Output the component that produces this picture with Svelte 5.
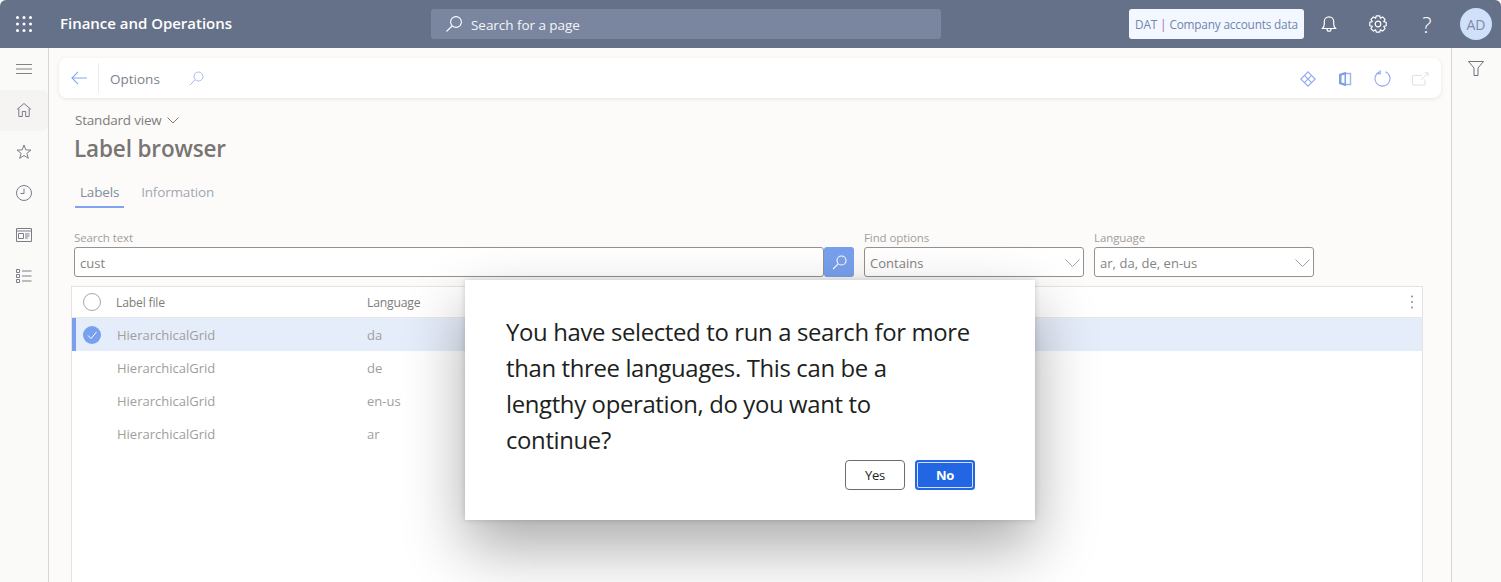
<script>
  const navItems = ['home', 'star', 'clock', 'workspace', 'list']
  const rows = [
    { file: 'HierarchicalGrid', lang: 'da', selected: true },
    { file: 'HierarchicalGrid', lang: 'de' },
    { file: 'HierarchicalGrid', lang: 'en-us' },
    { file: 'HierarchicalGrid', lang: 'ar' }
  ]

  // eight-tooth outline for the settings icon
  function gearPath(cx, cy, outer, inner, teeth) {
    const pts = []
    const step = (Math.PI * 2) / teeth
    for (let i = 0; i < teeth; i++) {
      const a = i * step
      for (const [r, d] of [[inner, -0.5], [outer, -0.27], [outer, 0.27], [inner, 0.5]]) {
        const t = a + d * step
        pts.push(`${(cx + r * Math.cos(t)).toFixed(2)} ${(cy + r * Math.sin(t)).toFixed(2)}`)
      }
    }
    return 'M' + pts.join('L') + 'Z'
  }
  const gear = gearPath(9, 9, 8.4, 6.2, 8)
</script>

<div class="page">
  <header class="topbar">
    <svg class="waffle" width="16" height="16" viewBox="0 0 16 16" fill="#fff">
      {#each [1.5, 8, 14.5] as cy}
        {#each [1.5, 8, 14.5] as cx}
          <circle {cx} {cy} r="1.5" />
        {/each}
      {/each}
    </svg>
    <div class="brand">Finance and Operations</div>
    <div class="globalsearch">
      <svg width="18" height="18" viewBox="0 0 18 18" fill="none" stroke="#fff" stroke-width="1.1">
        <circle cx="11" cy="7" r="5.4" /><path d="M7 11 1.5 16.5" />
      </svg>
      <span>Search for a page</span>
    </div>
    <div class="company">DAT <i>|</i> Company accounts data</div>
    <div class="topicons">
      <svg width="16" height="18" viewBox="0 0 16 18" fill="none" stroke="#fff" stroke-width="1.2">
        <path d="M1.5 13.5h13c-1.2-1.3-1.8-2.5-1.8-4.5V6.500a4.700 4.700 0 0 0-9.400 0V9c0 2-.6 3.200-1.800 4.500Z" /><path d="M6 14c0 3 4 3 4 0" />
      </svg>
      <svg width="18" height="18" viewBox="0 0 18 18" fill="none" stroke="#fff" stroke-width="1.2">
        <path d={gear} stroke-linejoin="round" /><circle cx="9" cy="9" r="2.8" />
      </svg>
      <span class="help">?</span>
      <div class="avatar">AD</div>
    </div>
  </header>

  <div class="workspace">
    <nav class="sidenav">
      <button class="navbtn burger" aria-label="Menu">
        <svg width="16" height="10" viewBox="0 0 16 10" stroke="#85827f" stroke-width="1"><path d="M0 .5h16M0 5h16M0 9.500h16" /></svg>
      </button>
      {#each navItems as item}
        <button class="navbtn" class:active={item === 'home'} aria-label={item}>
          <svg width="16" height="16" viewBox="0 0 16 16" fill="none" stroke="#807b88" stroke-width="1">
            {#if item === 'home'}
              <path d="M1 7.500 8 1.500l7 6M2.800 6.500v8h3.500V9.500h3.400v5h3.500v-8" />
            {:else if item === 'star'}
              <path d="m8 1 1.800 4.900 5.200.2-4.100 3.200 1.400 5L8 11.500l-4.300 2.800 1.400-5L1 6.100l5.200-.2Z" />
            {:else if item === 'clock'}
              <circle cx="8" cy="8" r="7.500" /><path d="M8 3.500V8.500H4.500" />
            {:else if item === 'workspace'}
              <path d="M.5 1.500h15v13H.5ZM.5 4h15M2.500 6.500h5v5h-5ZM9 7h4.500M9 9h4.500M9 11h3" />
            {:else}
              <path d="M.5 1.500h3v3h-3ZM.5 6.500h3v3h-3ZM.5 11.500h3v3h-3ZM6 3h9.500M6 8h9.500M6 13h9.500" />
            {/if}
          </svg>
        </button>
      {/each}
    </nav>

    <main class="content">
      <div class="actionbar">
        <button class="back" aria-label="Back">
          <svg width="16" height="14" viewBox="0 0 16 14" fill="none" stroke="#88a9ef" stroke-width="1.100"><path d="M7 .8 1 7l6 6.200M1 7h15" /></svg>
        </button>
        <span class="options">Options</span>
        <svg class="optsearch" width="15" height="15" viewBox="0 0 15 15" fill="none" stroke="#a9b9ef" stroke-width="1">
          <circle cx="9.500" cy="5.500" r="4.500" /><path d="M6.200 8.800 1 14" />
        </svg>
        <div class="actions">
          <svg width="16" height="16" viewBox="0 0 16 16" fill="none" stroke="#8fa8ee" stroke-width="1.100">
            <path d="m8 .8 7.200 7.200L8 15.200.8 8Z" /><path d="M4.400 4.400 11.600 11.600M11.600 4.400 4.400 11.600" />
          </svg>
          <svg width="14" height="16" viewBox="0 0 14 16" fill="none">
            <path d="M1 3 8 .8v14.400L1 13Z" fill="#7f9fe8" /><path d="M8 2.500h4.500v11H8" stroke="#9db6ee" stroke-width="1.400" /><path d="M3.500 4.500v7l3 .8V3.700Z" fill="#fff" />
          </svg>
          <svg width="17" height="17" viewBox="0 0 17 17" fill="none" stroke="#8fa8ee" stroke-width="1.100">
            <path d="M5.500 1.800a7.500 7.500 0 1 0 6 0" /><path d="M5.800 .6v3.400H2.400" transform="translate(.4 -.4)" />
          </svg>
          <svg width="17" height="14" viewBox="0 0 17 14" fill="none" stroke="#e4e1de" stroke-width="1">
            <path d="M10 3.500H.5v9.500h12.500V7.500M9 8l7-7M12.500.8H16.200V4.500" />
          </svg>
        </div>
      </div>

      <div class="viewpicker">Standard view
        <svg width="12" height="7" viewBox="0 0 12 7" fill="none" stroke="#7f7d7b"><path d="m.5.500 5.500 5.500L11.500.5" /></svg>
      </div>
      <h1>Label browser</h1>

      <div class="tabs">
        <div class="tab current">Labels</div>
        <div class="tab">Information</div>
      </div>

      <form class="filters">
        <div class="field grow">
          <span class="fieldlabel">Search text</span>
          <div class="searchrow">
            <div class="input">cust</div>
            <button type="button" class="searchbtn" aria-label="Search">
              <svg width="15" height="15" viewBox="0 0 15 15" fill="none" stroke="#fff" stroke-width="1.100">
                <circle cx="9.500" cy="5.500" r="4.500" /><path d="M6.200 8.800 1 14" />
              </svg>
            </button>
          </div>
        </div>
        <div class="field select">
          <span class="fieldlabel">Find options</span>
          <div class="input">Contains
            <svg width="15" height="8" viewBox="0 0 15 8" fill="none" stroke="#a3a19f"><path d="m.5.500 7 7 7-7" /></svg>
          </div>
        </div>
        <div class="field select">
          <span class="fieldlabel">Language</span>
          <div class="input">ar, da, de, en-us
            <svg width="15" height="8" viewBox="0 0 15 8" fill="none" stroke="#a3a19f"><path d="m.5.500 7 7 7-7" /></svg>
          </div>
        </div>
      </form>

      <section class="grid">
        <div class="gridhead">
          <span class="radio"></span>
          <span class="colfile">Label file</span>
          <span class="collang">Language</span>
          <svg class="dots" width="2" height="14" viewBox="0 0 2 14" fill="#8f8d8b">
            <circle cx="1" cy="1.500" r="1" /><circle cx="1" cy="7" r="1" /><circle cx="1" cy="12.500" r="1" />
          </svg>
        </div>
        {#each rows as row}
          <div class="gridrow" class:selected={row.selected}>
            {#if row.selected}
              <svg class="check" width="18" height="18" viewBox="0 0 18 18">
                <circle cx="9" cy="9" r="9" fill="#78a0ec" /><path d="m5 9.500 3 3 5.500-6.500" fill="none" stroke="#fff" />
              </svg>
            {/if}
            <span class="colfile">{row.file}</span>
            <span class="collang">{row.lang}</span>
          </div>
        {/each}
      </section>
    </main>

    <aside class="filterpane">
      <svg width="16" height="15" viewBox="0 0 16 15" fill="none" stroke="#75717c" stroke-width="1"><path d="M.5.500h15L10 7v7.500H6V7Z" /></svg>
    </aside>
  </div>

  <div class="dialog" role="dialog">
    <p>You have selected to run a search for more than three languages. This can be a lengthy operation, do you want to continue?</p>
    <div class="dialogbtns">
      <button class="yes">Yes</button>
      <button class="no">No</button>
    </div>
  </div>
</div>

<style>
  :global(body) {
    margin: 0;
    background: #4d586c;
  }
  .page {
    position: relative;
    width: 1501px;
    height: 582px;
    overflow: hidden;
    display: flex;
    flex-direction: column;
    font-family: "Open Sans", "Noto Sans", "Liberation Sans", sans-serif;
    background: #fcfbfa;
  }
  button {
    font: inherit;
    padding: 0;
    border: 0;
    background: none;
  }
  .topbar {
    height: 48px;
    flex: none;
    display: flex;
    align-items: center;
    background: #657188;
    border-radius: 6px 6px 0 0;
    padding-left: 16px;
    color: #fff;
  }
  .brand {
    margin-left: 28px;
    width: 371px;
    margin-top: -2px;
    font-size: 15px;
    font-weight: 600;
    letter-spacing: -0.02px;
    white-space: nowrap;
  }
  .globalsearch {
    width: 510px;
    height: 30px;
    box-sizing: border-box;
    display: flex;
    align-items: center;
    gap: 8px;
    padding-left: 14px;
    background: #7a86a0;
    border-radius: 3px;
    font-size: 13.5px;
    letter-spacing: -0.05px;
    color: #f4f5f8;
  }
  .globalsearch span {
    padding-top: 2px;
  }
  .company {
    margin-left: 188px;
    width: 175px;
    height: 30px;
    box-sizing: border-box;
    display: flex;
    align-items: center;
    justify-content: center;
    gap: 3px;
    background: #f3f7ff;
    border-radius: 3px;
    font-size: 11.8px;
    letter-spacing: -0.18px;
    color: #6f86ad;
    white-space: nowrap;
  }
  .company i {
    font-style: normal;
    color: #a866b5;
  }
  .topicons {
    display: flex;
    align-items: center;
    margin-left: 17px;
  }
  .topicons svg:nth-child(2) {
    margin-left: 32px;
  }
  .help {
    margin-left: 35px;
    font-size: 22px;
    font-weight: 300;
    width: 10px;
    text-align: center;
  }
  .avatar {
    margin-left: 28px;
    width: 32px;
    height: 32px;
    border-radius: 50%;
    background: #cfe0fb;
    color: #7f8a9f;
    font-size: 14px;
    display: flex;
    align-items: center;
    justify-content: center;
  }
  .workspace {
    flex: 1;
    display: flex;
    min-height: 0;
  }
  .sidenav {
    width: 48px;
    flex: none;
    border-right: 1px solid #d8d6d4;
    background: #fafaf9;
    display: flex;
    flex-direction: column;
  }
  .navbtn {
    height: 41.500px;
    display: flex;
    align-items: center;
    justify-content: center;
    border-radius: 0 6px 6px 0;
  }
  .burger {
    height: 42px;
    margin-bottom: -0.500px;
  }
  .active {
    background: #f5f4f2;
  }
  .content {
    flex: 1;
    min-width: 0;
    box-sizing: border-box;
    padding: 10px 10px 0;
  }
  .actionbar {
    height: 40px;
    display: flex;
    align-items: center;
    background: #fff;
    border-radius: 8px;
    box-shadow: 0 1px 4px rgba(0, 0, 0, 0.09);
  }
  .back {
    height: 30px;
    display: flex;
    align-items: center;
    justify-content: center;
    border-right: 1px solid #ecebea;
    box-sizing: content-box;
    width: 38px;
    padding-left: 2px;
    margin-left: -1px;
  }
  .options {
    margin-left: 11px;
    font-size: 13.500px;
    font-weight: 500;
    letter-spacing: 0;
    color: #7d8289;
    padding-top: 2px;
  }
  .optsearch {
    margin-left: 29px;
  }
  .actions {
    margin-left: auto;
    margin-right: 12px;
    display: flex;
    align-items: center;
    gap: 21px;
    padding-top: 1px;
  }
  .actions svg:nth-child(2) {
    margin-left: 1px;
  }
  .actions svg:nth-child(3) {
    margin-left: 1px;
  }
  .viewpicker {
    margin: 13px 0 0 16px;
    height: 18px;
    display: flex;
    align-items: center;
    gap: 5px;
    font-size: 13.500px;
    letter-spacing: -0.2px;
    color: #7f7d7b;
  }
  h1 {
    margin: 2px 0 0 15px;
    font-size: 22.500px;
    line-height: 36px;
    font-weight: 600;
    letter-spacing: -0.15px;
    color: #787573;
  }
  .tabs {
    margin: 14px 0 0 16px;
    display: flex;
    gap: 7px;
  }
  .tab {
    padding: 0 5px;
    height: 27px;
    box-sizing: border-box;
    line-height: 22px;
    font-size: 13.500px;
    letter-spacing: -0.18px;
    color: #a2a8b3;
  }
  .tab:last-child {
    margin-left: 5px;
  }
  .tab.current {
    color: #7f8c9f;
    border-bottom: 2px solid #7fa3ee;
  }
  .filters {
    margin: 21px 127px 0 15px;
    display: flex;
    gap: 10px;
  }
  .field {
    display: flex;
    flex-direction: column;
    min-width: 0;
  }
  .grow {
    flex: 1;
  }
  .select {
    width: 220px;
    flex: none;
  }
  .fieldlabel {
    height: 18px;
    line-height: 18px;
    font-size: 11.500px;
    letter-spacing: -0.1px;
    color: #a09e9c;
  }
  .searchrow {
    display: flex;
  }
  .input {
    flex: 1;
    height: 30px;
    box-sizing: border-box;
    border: 1px solid #949290;
    border-radius: 3px;
    background: #fff;
    padding: 2px 3px 0 5px;
    display: flex;
    align-items: center;
    justify-content: space-between;
    font-size: 13px;
    letter-spacing: 0.03px;
    color: #858381;
  }
  .searchbtn {
    width: 30px;
    height: 30px;
    flex: none;
    background: #78a0ec;
    border-radius: 3px;
    display: flex;
    align-items: center;
    justify-content: center;
  }
  .grid {
    margin: 9px 18px 0 12px;
    height: 310px;
    background: #fff;
    border: 1px solid #e4e3e1;
    box-sizing: border-box;
  }
  .gridhead,
  .gridrow {
    position: relative;
    display: flex;
    align-items: center;
    letter-spacing: -0.2px;
  }
  .gridhead {
    height: 30px;
    font-size: 12.200px;
    border-bottom: 1px solid #e9e8e7;
    color: #7f7d7b;
    font-weight: 500;
  }
  .gridrow {
    height: 33px;
    color: #a09e9c;
    font-size: 13px;
    letter-spacing: 0;
  }
  .selected {
    height: 33px;
    background: #e6edfa;
    box-shadow: inset 4px 0 0 #78a0ec;
  }
  .radio {
    position: absolute;
    left: 11px;
    top: 6px;
    width: 16px;
    height: 16px;
    border: 1px solid #a8a6a4;
    border-radius: 50%;
  }
  .check {
    position: absolute;
    left: 11px;
    top: 8px;
  }
  .colfile {
    margin-left: 44px;
    width: 251px;
  }
  .gridrow .colfile {
    margin-left: 45px;
    width: 250px;
  }
  .collang {
    flex: 1;
  }
  .dots {
    margin-right: 9px;
  }
  .filterpane {
    width: 50px;
    flex: none;
    box-sizing: border-box;
    border-left: 1px solid #d8d6d4;
    background: #fafaf9;
    display: flex;
    justify-content: center;
    padding: 13px 2px 0 0;
  }
  .dialog {
    position: absolute;
    left: 465px;
    top: 280px;
    width: 570px;
    height: 240px;
    box-sizing: border-box;
    padding: 34px 60px 0 41px;
    background: #fff;
    box-shadow: 0 0 6px rgba(0, 0, 0, 0.16), 0 28px 58px rgba(0, 0, 0, 0.33);
  }
  .dialog p {
    margin: 0 4px 0 0;
    font-size: 23.900px;
    line-height: 36px;
    letter-spacing: -0.35px;
    color: #201f1e;
  }
  .dialogbtns {
    margin-top: 2px;
    display: flex;
    justify-content: flex-end;
    gap: 10px;
  }
  .dialogbtns button {
    width: 60px;
    height: 30px;
    box-sizing: border-box;
    border-radius: 4px;
    font-size: 13px;
    font-weight: 500;
    letter-spacing: -0.2px;
  }
  .yes {
    border: 1px solid #6f6d6b;
    color: #201f1e;
    background: #fff;
  }
  .dialogbtns .no {
    background: #2266e3;
    color: #fff;
    font-weight: 700;
    box-shadow: inset 0 0 0 2px #2266e3, inset 0 0 0 3px #cfe0fb;
  }
</style>
